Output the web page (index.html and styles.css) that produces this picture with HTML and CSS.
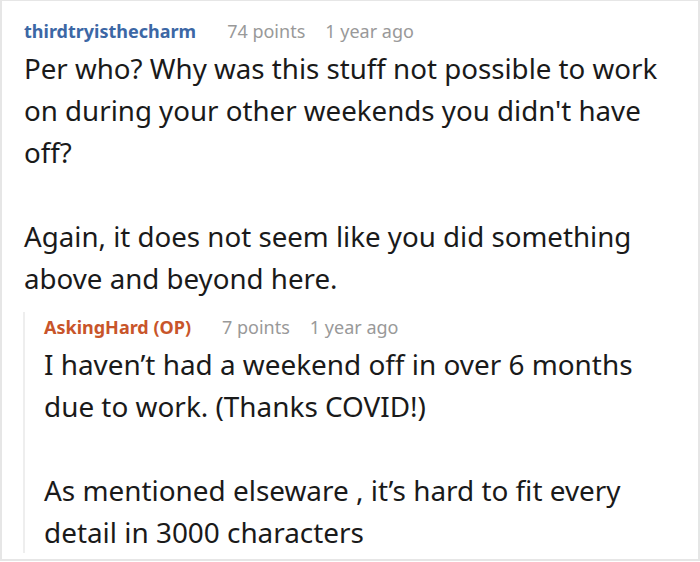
FILE: index.html
```html
<!DOCTYPE html>
<html>
<head>
<meta charset="utf-8">
<link rel="stylesheet" href="styles.css">
</head>
<body>
<div class="card">
  <div class="comment">
    <div class="meta">
      <span class="user">thirdtryisthecharm</span>
      <span class="points">74 points</span>
      <span class="time">1 year ago</span>
    </div>
    <div class="body">
      <p>Per who? Why was this stuff not possible to work on during your other weekends you didn't have off?</p>
      <p>Again, it does not seem like you did something above and beyond here.</p>
    </div>
    <div class="reply">
      <div class="meta">
        <span class="user op">AskingHard (OP)</span>
        <span class="points">7 points</span>
        <span class="time">1 year ago</span>
      </div>
      <div class="body">
        <p>I haven’t had a weekend off in over 6 months due to work. (Thanks COVID!)</p>
        <p>As mentioned elseware , it’s hard to fit every detail in 3000 characters</p>
      </div>
    </div>
  </div>
</div>
</body>
</html>
```
FILE: styles.css
```css
html, body {
  margin: 0;
  padding: 0;
  background: #fff;
}
.card {
  box-sizing: border-box;
  width: 700px;
  height: 561px;
  border: 2px solid #e6e6e6;
  border-top-width: 1px;
  overflow: hidden;
  font-family: "Noto Sans", "Open Sans", sans-serif;
  color: #1a1a1a;
}
.comment {
  padding: 15px 24px 0 22px;
}
.meta {
  display: flex;
  align-items: baseline;
  font-size: 18px;
  line-height: 30px;
  color: #999;
}
.user {
  font-weight: 700;
  color: #3c67a5;
  margin-right: 31px;
}
.user.op {
  color: #c8552a;
  margin-right: 31px;
}
.points {
  margin-right: 20px;
}
.body {
  font-size: 27.7px;
  line-height: 42px;
  margin-top: 1px;
}
.body p {
  margin: 0 0 42px 0;
}
.body p:last-child {
  margin-bottom: 0;
}
.reply {
  margin-top: 27px;
  margin-left: -1px;
  border-left: 2px solid #eeeeee;
  padding-left: 19px;
}
.reply .meta {
  margin-top: -14px;
}
.reply .body {
  font-size: 27.9px;
  margin-top: 1px;
}
.reply .body p:last-child {
  margin-bottom: -12px;
}
```
